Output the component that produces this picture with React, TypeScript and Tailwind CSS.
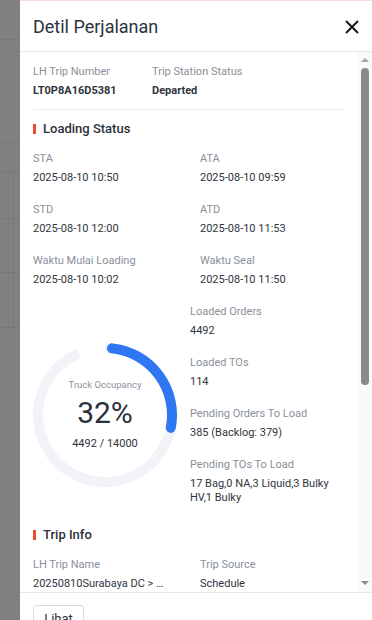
import { X } from "lucide-react";

const label = "text-[11px] leading-[14px] text-[#8a909a]";
const value = "mt-[5px] text-[11px] leading-[14px] text-[#30353d]";

function Field({ title, text, bold }: { title: string; text: string; bold?: boolean }) {
  return (
    <div className="min-w-0">
      <p className={label}>{title}</p>
      <p className={`${value} truncate ${bold ? "font-bold text-[#1f2329]" : ""}`}>{text}</p>
    </div>
  );
}

function SectionTitle({ children }: { children: string }) {
  return (
    <div className="flex items-center gap-[7px]">
      <span className="h-[10px] w-[3px] bg-[#ee4d2d]" />
      <h3 className="text-[13px] font-medium leading-[18px] text-[#2b313b]">{children}</h3>
    </div>
  );
}

function arc(from: number, to: number, r: number, c: number) {
  const pt = (a: number) => {
    const rad = (a * Math.PI) / 180;
    return `${(c + r * Math.sin(rad)).toFixed(2)} ${(c - r * Math.cos(rad)).toFixed(2)}`;
  };
  const large = to - from > 180 ? 1 : 0;
  return `M ${pt(from)} A ${r} ${r} 0 ${large} 1 ${pt(to)}`;
}

function OccupancyRing() {
  return (
    <div className="relative h-[144px] w-[144px]">
      <svg width="144" height="144" viewBox="0 0 144 144">
        <path d={arc(0, 337, 67, 72)} fill="none" stroke="#f2f3f8" strokeWidth="10" />
        <path d={arc(6, 101, 67, 72)} fill="none" stroke="#2f76f2" strokeWidth="10" strokeLinecap="round" />
      </svg>
      <div className="absolute inset-0 flex flex-col items-center justify-center">
        <p className="text-[9.5px] leading-[12px] text-[#8c919a]">Truck Occupancy</p>
        <p className="mt-[5px] text-[30px] leading-[34px] text-[#2b313b]">32%</p>
        <p className="mt-[7px] text-[11px] leading-[14px] text-[#30353d]">4492 / 14000</p>
      </div>
    </div>
  );
}

export default function App() {
  return (
    <div className="flex h-[620px] w-[372px] overflow-hidden bg-[#808080] font-['Roboto','Liberation_Sans',sans-serif]">
      {/* page behind the mask */}
      <div className="flex w-[20px] flex-col">
        <div className="h-[40px] border-b border-[#787878]" />
        <div className="h-[103px] border-b border-[#787878]" />
        <div className="h-[29px] border-b border-[#787878]" />
        <div className="h-[47px] border-b border-[#787878]">
          <div className="h-full w-[14px] border-r border-[#787878]" />
        </div>
        <div className="h-[54px] border-b border-[#787878]">
          <div className="h-full w-[14px] border-r border-[#787878]" />
        </div>
        <div className="h-[55px] border-b border-[#787878]">
          <div className="h-full w-[14px] border-r border-[#787878]" />
        </div>
      </div>

      <aside className="flex h-[620px] flex-1 flex-col border-t border-[#f5d9dd] bg-white">
        <header className="flex h-[51px] shrink-0 items-center justify-between border-b border-[#e8e8e8] pl-[13px] pr-[9px] pt-[2px]">
          <h2 className="text-[18px] leading-[24px] text-[#2b3340]">Detil Perjalanan</h2>
          <X size={22} strokeWidth={2} className="text-[#111]" />
        </header>

        <div className="flex h-[540px] shrink-0">
          <div className="min-w-0 flex-1 overflow-hidden pl-[13px] pr-[13px] pt-[13px]">
            <div className="grid grid-cols-[119px_1fr]">
              <Field title="LH Trip Number" text="LT0P8A16D5381" bold />
              <Field title="Trip Station Status" text="Departed" bold />
            </div>
            <div className="mt-[11px] h-px bg-[#ececec]" />

            <div className="mt-[10px]">
              <SectionTitle>Loading Status</SectionTitle>
            </div>
            <div className="mt-[14px] grid grid-cols-[167px_1fr] gap-y-[18px]">
              <Field title="STA" text="2025-08-10 10:50" />
              <Field title="ATA" text="2025-08-10 09:59" />
              <Field title="STD" text="2025-08-10 12:00" />
              <Field title="ATD" text="2025-08-10 11:53" />
              <Field title="Waktu Mulai Loading" text="2025-08-10 10:02" />
              <Field title="Waktu Seal" text="2025-08-10 11:50" />
            </div>

            <div className="mt-[18px] flex">
              <div className="w-[157px] shrink-0 pt-[38px]">
                <OccupancyRing />
              </div>
              <div className="flex min-w-0 flex-1 flex-col gap-[18px]">
                <Field title="Loaded Orders" text="4492" />
                <Field title="Loaded TOs" text="114" />
                <Field title="Pending Orders To Load" text="385 (Backlog: 379)" />
                <div>
                  <p className={label}>Pending TOs To Load</p>
                  <p className={value}>17 Bag,0 NA,3 Liquid,3 Bulky HV,1 Bulky</p>
                </div>
              </div>
            </div>

            <div className="mt-[21px]">
              <SectionTitle>Trip Info</SectionTitle>
            </div>
            <div className="mt-[14px] grid grid-cols-[167px_1fr] gap-y-[18px]">
              <div className="min-w-0">
                <p className={label}>LH Trip Name</p>
                <p className={`${value} w-[132px] truncate`}>20250810Surabaya DC &gt; Jakarta Hub</p>
              </div>
              <Field title="Trip Source" text="Schedule" />
              <Field title="Vehicle Type" text="Wingbox" />
              <Field title="Driver" text="-" />
            </div>
          </div>

          {/* scrollbar */}
          <div className="flex w-[15px] shrink-0 flex-col items-center bg-[#fafafa] pb-[7px] pt-[6px]">
            <span className="h-0 w-0 border-x-[4px] border-b-[4px] border-x-transparent border-b-[#a3a3a3]" />
            <span className="mt-[6px] h-[317px] w-[8px] rounded-full bg-[#8b8b8b]" />
            <span className="flex-1" />
            <span className="h-0 w-0 border-x-[4px] border-t-[4px] border-x-transparent border-t-[#8b8b8b]" />
          </div>
        </div>

        <footer className="flex-1 border-t border-[#e8e8e8] pl-[13px] pt-[12px]">
          <button
            type="button"
            className="h-[28px] w-[51px] rounded-[3px] border border-[#d9d9d9] bg-white text-[13px] text-[#2b313b]"
          >
            Lihat
          </button>
        </footer>
      </aside>
    </div>
  );
}
